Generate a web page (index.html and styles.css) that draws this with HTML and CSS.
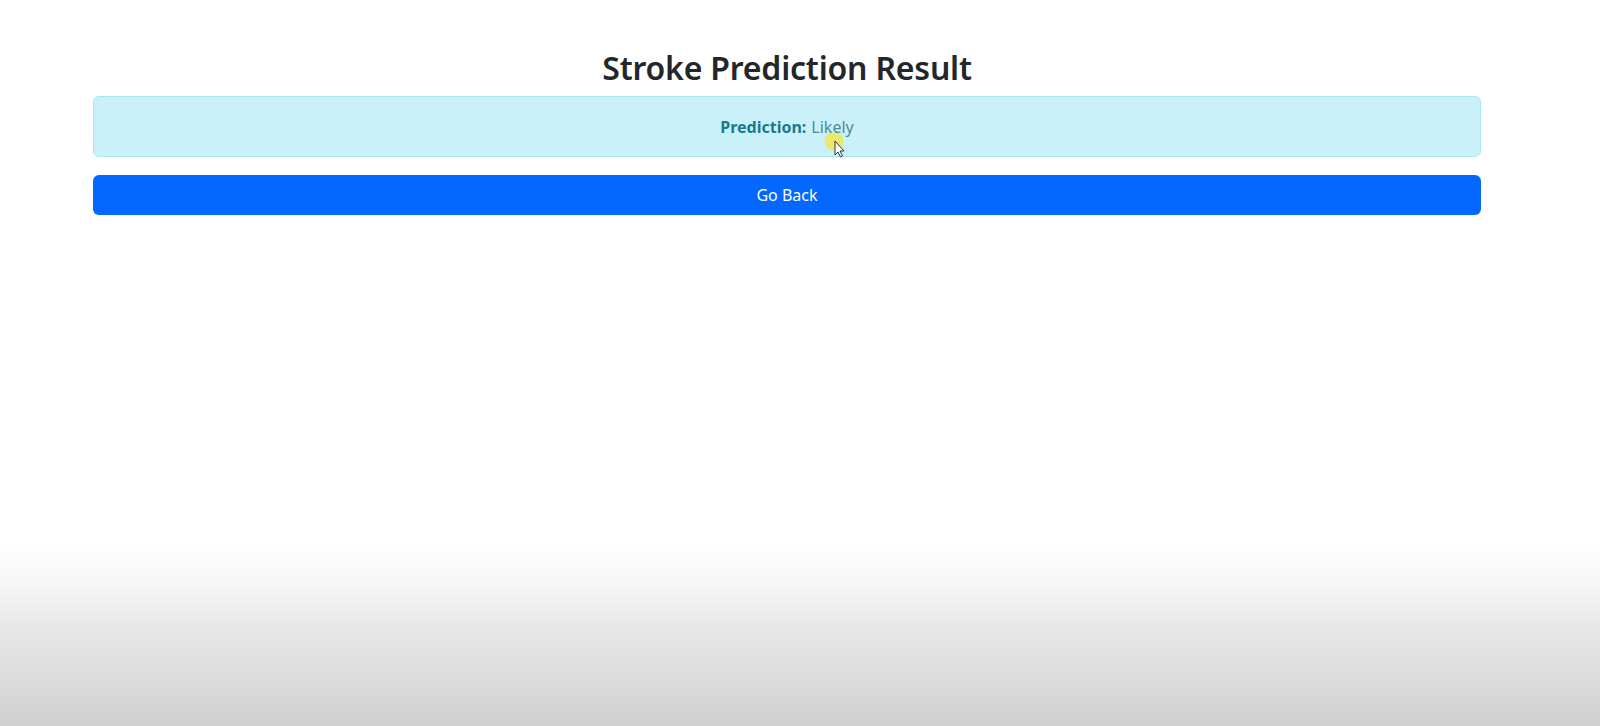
FILE: index.html
```html
<!DOCTYPE html>
<html lang="en">
<head>
<meta charset="utf-8">
<title>Stroke Prediction Result</title>
<link rel="stylesheet" href="styles.css">
</head>
<body>
  <main class="container">
    <h2 class="title">Stroke Prediction Result</h2>
    <div class="alert"><strong>Prediction:</strong> <span class="value">Likely</span></div>
    <a class="btn" href="#">Go Back</a>
  </main>
  <div class="cursor">
    <svg width="30" height="30" viewBox="0 0 30 30">
      <circle cx="12" cy="8" r="9.5" fill="#f3e64a" opacity="0.8"/>
      <path d="M13 8 L13 22 L16 19 L18.5 24 L20.5 23 L18 18 L22 18 Z" fill="#fff" stroke="#333" stroke-width="1" stroke-linejoin="round"/>
    </svg>
  </div>
  <div class="shade"></div>
</body>
</html>
```
FILE: styles.css
```css
html, body {
  margin: 0;
  padding: 0;
  background: #fff;
  height: 100%;
}
body {
  font-family: "Segoe UI", "Noto Sans", "Open Sans", sans-serif;
  color: #212529;
  overflow: hidden;
}
.container {
  width: 1388px;
  margin-left: 93px;
  padding-top: 47px;
  display: flex;
  flex-direction: column;
}
.title {
  margin: 0 0 8px;
  font-size: 32px;
  font-weight: 600;
  line-height: 41px;
  text-align: center;
  color: #23272b;
  letter-spacing: -0.2px;
}
.alert {
  box-sizing: border-box;
  height: 61px;
  border: 1px solid #a9e7f3;
  background: #caf1f9;
  border-radius: 6px;
  display: flex;
  align-items: center;
  justify-content: center;
  font-size: 16px;
  color: #197a8e;
}
.alert strong {
  font-weight: 700;
  margin-right: 5px;
}
.alert .value {
  color: #4a8c98;
}
.btn {
  margin-top: 18px;
  height: 40px;
  border-radius: 6px;
  background: #0468fe;
  color: #fff;
  text-decoration: none;
  display: flex;
  align-items: center;
  justify-content: center;
  font-size: 16px;
}
.cursor {
  position: absolute;
  left: 822px;
  top: 133px;
  width: 30px;
  height: 30px;
}
.shade {
  position: fixed;
  left: 0;
  right: 0;
  bottom: 0;
  height: 182px;
  pointer-events: none;
  background: linear-gradient(to bottom, rgba(0,0,0,0) 0%, rgba(0,0,0,0.03) 20%, rgba(0,0,0,0.09) 45%, rgba(0,0,0,0.14) 75%, rgba(0,0,0,0.185) 100%);
}
```
